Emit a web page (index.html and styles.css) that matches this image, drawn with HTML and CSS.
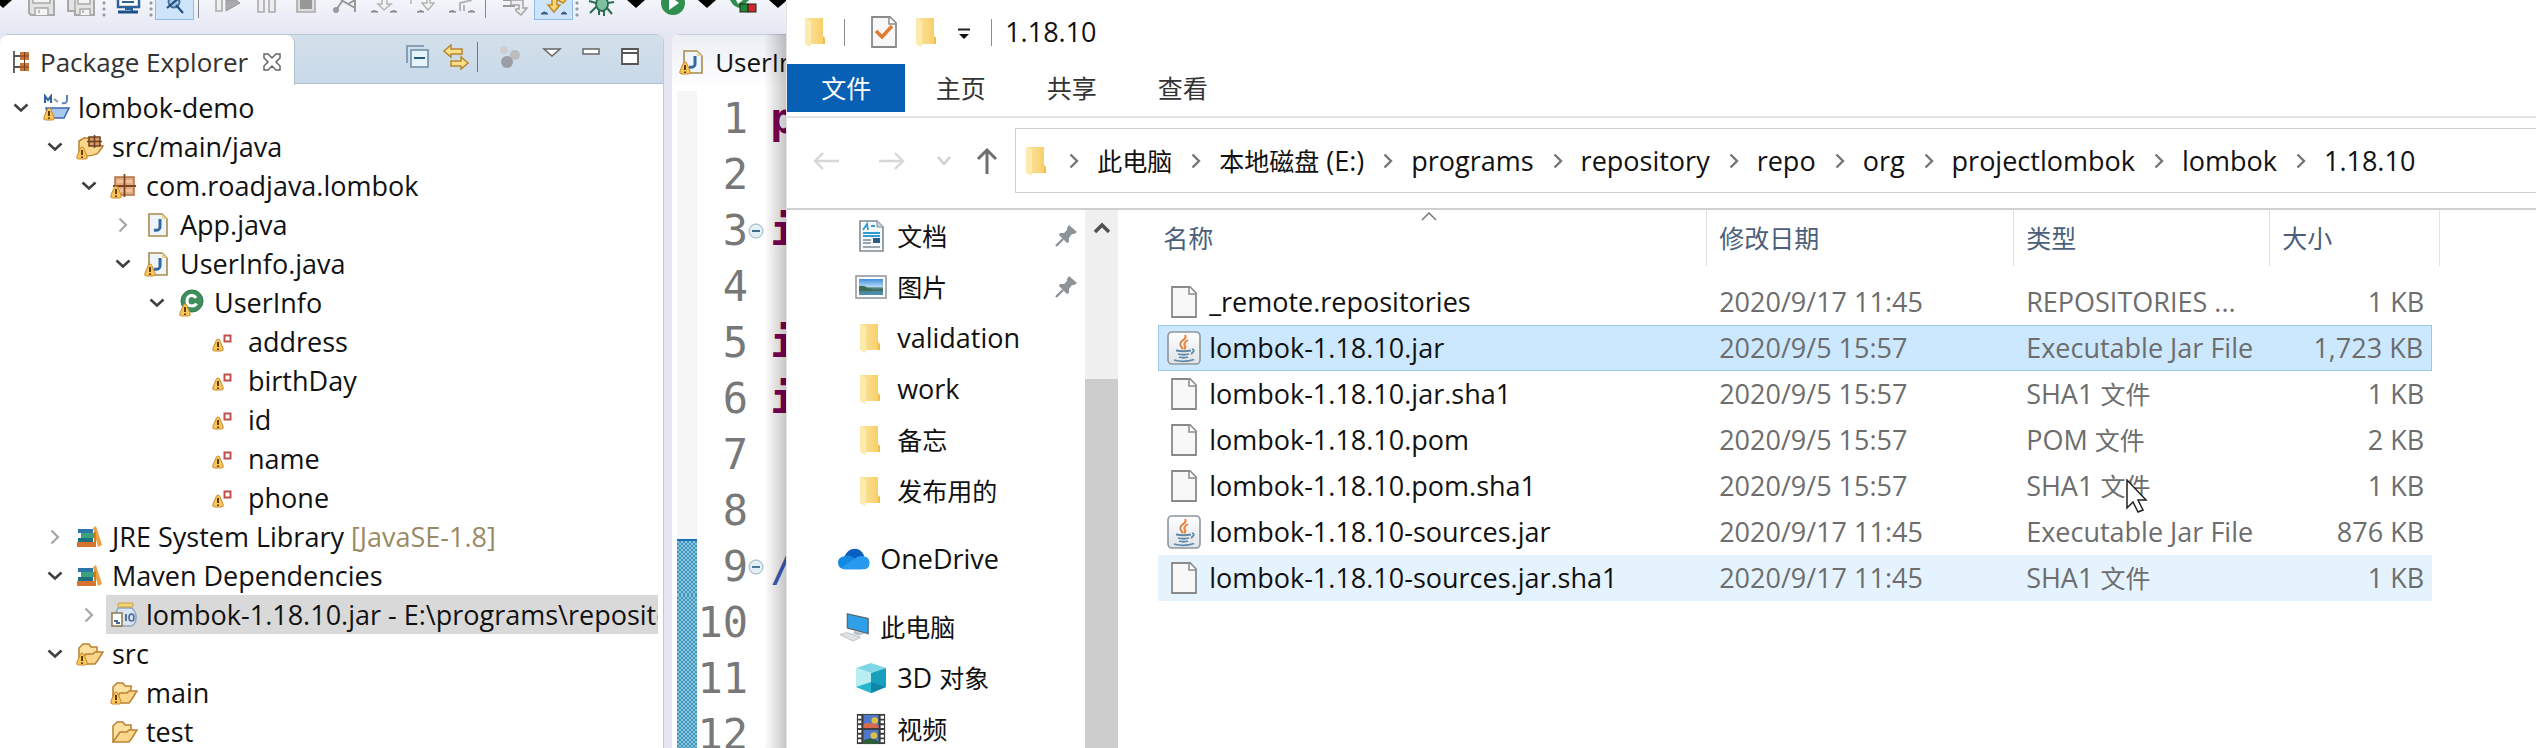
FILE: index.html
```html
<!DOCTYPE html>
<html lang="zh-CN">
<head>
    <meta charset="UTF-8">
    <meta name="viewport" content="width=device-width, initial-scale=1.0">
    <title>1.18.10</title>
    <link rel="stylesheet" href="styles.css">
</head>
<body>

<!-- shared icons -->
<svg class="sprite" aria-hidden="true">
    <defs>
        <linearGradient id="g-folder" x1="0" x2="1"><stop offset="0" stop-color="#fbe6a0"/><stop offset="1" stop-color="#f7cd66"/></linearGradient>
        <linearGradient id="g-sky" x1="0" y1="0" x2="0" y2="1"><stop offset="0" stop-color="#3f8fe0"/><stop offset="0.5" stop-color="#b7dcf4"/><stop offset="0.55" stop-color="#4c7f7c"/><stop offset="1" stop-color="#4b8fb5"/></linearGradient>
        <linearGradient id="g-java" x1="0" y1="0" x2="0" y2="1"><stop offset="0" stop-color="#ffffff"/><stop offset="1" stop-color="#dfe4e8"/></linearGradient>
    </defs>
    <symbol id="i-down" viewBox="0 0 16 10"><path d="M1.5 1.5L8 7.5L14.5 1.5" fill="none" stroke="#404040" stroke-width="2.6"/></symbol>
    <symbol id="i-right" viewBox="0 0 10 16"><path d="M1.5 1.5L8 8L1.5 14.5" fill="none" stroke="#a6a6a6" stroke-width="2.2"/></symbol>
    <symbol id="i-crumb" viewBox="0 0 10 16"><path d="M1.5 1.5L8 8L1.5 14.5" fill="none" stroke="#757575" stroke-width="2.4"/></symbol>
    <symbol id="i-warn" viewBox="0 0 12 14"><path d="M6 1Q7.5 1 8 3L11 10Q12 13 9.500 13H2.500Q0 13 1 10L4 3Q4.500 1 6 1Z" fill="#fbc55a" stroke="#c98a2c"/><path d="M6 4V9M6 10.500V12" stroke="#4a3000" stroke-width="1.800"/></symbol>
    <symbol id="i-project" viewBox="0 0 28 28"><path d="M3 9V2L6 6L9 2V9" fill="none" stroke="#2f62a5" stroke-width="2"/><path d="M12 5L16 8" stroke="#999" stroke-width="2"/><path d="M25 1V6Q25 10 20 9" fill="none" stroke="#5a85b8" stroke-width="2"/><path d="M4 14H27L22 24H6Z" fill="#a9c8f0" stroke="#3d66b0" stroke-width="1.500"/><use href="#i-warn" x="1" y="13" width="12" height="14"/></symbol>
    <symbol id="i-srcfolder" viewBox="0 0 28 28"><path d="M3 22V8L8 5H20V11L27 13L22 20Q18 23 8 23Z" fill="#fbd68a" stroke="#b98232" stroke-width="1.500"/><rect x="13" y="4" width="11" height="9" fill="#d99a62" stroke="#6d3f22" stroke-width="1.500"/><path d="M18.500 2V15M11 8.500H26" stroke="#6d3f22" stroke-width="1.500"/><use href="#i-warn" x="0" y="13" width="12" height="14"/></symbol>
    <symbol id="i-package" viewBox="0 0 28 28"><rect x="5" y="5" width="19" height="18" fill="#e2ab80" stroke="#b3704a" stroke-width="1.500"/><path d="M7 9.500H22M7 18.500H22" stroke="#efc29c" stroke-width="3"/><path d="M14.500 2V25M3 14H26" stroke="#7d4426" stroke-width="1.800"/><use href="#i-warn" x="0" y="13" width="12" height="14"/></symbol>
    <symbol id="i-java" viewBox="0 0 28 28"><path d="M5 3H18L23 8V25H5Z" fill="#eef4fa" stroke="#a98b4d" stroke-width="1.600"/><path d="M18 3V8H23Z" fill="#f0d48e"/><path d="M16 8V16Q16 20 10 19" fill="none" stroke="#33689f" stroke-width="3"/></symbol>
    <symbol id="i-javawarn" viewBox="0 0 28 28"><use href="#i-java" width="28" height="28"/><use href="#i-warn" x="0" y="13" width="12" height="14"/></symbol>
    <symbol id="i-class" viewBox="0 0 28 28"><circle cx="14" cy="12" r="11" fill="#3f8f5d" stroke="#2f7549"/><path d="M18 9Q16 6 13 6.500Q9 7.500 9 12Q9 17 14 17Q17 17 18.500 14.500" fill="none" stroke="#fff" stroke-width="3"/><use href="#i-warn" x="1" y="14" width="12" height="14"/></symbol>
    <symbol id="i-field" viewBox="0 0 28 28"><rect x="12.500" y="7.500" width="6" height="6" fill="#fff" stroke="#c0504d" stroke-width="2"/><use href="#i-warn" x="0" y="10" width="12" height="14"/></symbol>
    <symbol id="i-library" viewBox="0 0 28 28"><path d="M2 6H17V10H2Z" fill="#2b77a5"/><path d="M5 10H18V15H5Z" fill="#3da27e"/><path d="M2 15H17V19H2Z" fill="#1e6f80"/><path d="M1 19H18V24H1Z" fill="#d9722e"/><path d="M17 5L20 3L26 22L22 24Z" fill="#eda144"/><path d="M19 9V24" stroke="#c97c2a" stroke-width="2"/></symbol>
    <symbol id="i-jar" viewBox="0 0 28 28"><path d="M8 7H22Q27 12 26 18Q25 25 20 25H8Q4 22 5 14Z" fill="#d8e4f2" stroke="#8fa5c2" stroke-width="1.500"/><rect x="8" y="2" width="15" height="4" rx="1" fill="#f3d37c" stroke="#c9a03f"/><rect x="2" y="12" width="10" height="13" fill="#fff" stroke="#8a7a4a" stroke-width="1.500"/><path d="M4 20H8M6 22H10M16 13V20" stroke="#4a6a9a" stroke-width="1.800"/><ellipse cx="21.500" cy="16.500" rx="2.500" ry="3.500" fill="none" stroke="#4a6a9a" stroke-width="1.600"/></symbol>
    <symbol id="i-open" viewBox="0 0 28 28"><path d="M3 24V8L7 4H13L15 7H21V12" fill="#fbe0a0" stroke="#b98232" stroke-width="1.500"/><path d="M3 24L10 14H17L19 12H27L22 20L19 24Z" fill="#fbd68a" stroke="#b98232" stroke-width="1.500"/></symbol>
    <symbol id="i-openwarn" viewBox="0 0 28 28"><use href="#i-open" width="28" height="28"/><use href="#i-warn" x="0" y="12" width="12" height="14"/></symbol>
    <symbol id="i-folder" viewBox="0 0 24 32"><path d="M2 2H20V21L22 23V28H4Z" fill="url(#g-folder)"/><path d="M2 2L8 5V28L7 31L2 28Z" fill="#fdeaae"/><path d="M20 20V28H22V22Z" fill="#f0be4a"/></symbol>
    <symbol id="i-file" viewBox="0 0 26 32"><path d="M1 1H19L25 7V31H1Z" fill="#f8f8f8" stroke="#8a8a8a" stroke-width="1.800"/><path d="M18 1V8H25" fill="#fff" stroke="#8a8a8a" stroke-width="1.500"/></symbol>
    <symbol id="i-jarfile" viewBox="0 0 34 34"><rect x="1" y="1" width="32" height="32" rx="4" fill="url(#g-java)" stroke="#8d969c" stroke-width="1.600"/><path d="M18 4Q20 7 15 10Q11 13 16 18M21 9Q16 12 18 15Q19 17 17 18" fill="none" stroke="#e8813b" stroke-width="2"/><path d="M9 19.500Q17 21 24 19.500M11 23Q17 24.500 22 23M12 26Q17 27.500 21 26M25 18Q29 19 24 23" fill="none" stroke="#5f87a8" stroke-width="1.800"/><path d="M7 29Q17 32 27 28.500" fill="none" stroke="#5f87a8" stroke-width="1.800"/></symbol>
    <symbol id="i-doc" viewBox="0 0 32 32"><path d="M5 1H22L28 7V31H5Z" fill="#f7fafc" stroke="#7f8b94" stroke-width="1.600"/><path d="M22 1V7H28" fill="#cfd6dc" stroke="#7f8b94"/><path d="M8 10L12 4L13 10M16 6H20M8 13H25M8 16H25" stroke="#2f9bd0" stroke-width="1.800" fill="none"/><path d="M8 20H16M8 23H16M8 27H25" stroke="#7f8b94" stroke-width="1.500"/><rect x="18" y="18" width="7" height="5" fill="#2b5d88"/></symbol>
    <symbol id="i-pic" viewBox="0 0 32 32"><rect x="1" y="5" width="30" height="22" fill="#fff" stroke="#8b949b" stroke-width="1.500"/><rect x="4" y="8" width="24" height="16" fill="url(#g-sky)"/><path d="M4 15Q9 14 13 17Q21 20 28 18V20H4Z" fill="#3e6b56"/></symbol>
    <symbol id="i-pin" viewBox="0 0 24 24"><path d="M15 1L23 8L20 10L18 10L15 14L15 18L13 19L5 11L6 9L10 9L13 6L13 4Z" fill="#8c9399"/><path d="M9 15L2 22" stroke="#8c9399" stroke-width="2.400"/></symbol>
    <symbol id="i-cloud" viewBox="0 0 34 24"><path d="M6 11Q10 1 18 1Q25 1 28 9L14 17Z" fill="#0a5ec0"/><path d="M7 9Q13 7 17 11L29 21Q27 23 24 23H7Q0 22 0 16Q0 10 7 9Z" fill="#1389e0"/><path d="M17 12Q21 8 27 9Q34 10 33.500 17Q33 23 27 23H7Q4 22 4 21Z" fill="#279bf0"/></symbol>
    <symbol id="i-pc" viewBox="0 0 34 32"><path d="M10 2L32 7V23L10 17Z" fill="#2fa0ea" stroke="#5b6b78" stroke-width="1.500"/><path d="M18 20L24 22L29 23L22 25L16 23Z" fill="#b9c3cb"/><path d="M2 24L10 22L24 27L16 31Z" fill="#dfe3e6" stroke="#b9c0c5"/></symbol>
    <symbol id="i-cube" viewBox="0 0 32 32"><path d="M16 1L31 6L16 11L1 6Z" fill="#7fd6e6"/><path d="M1 6L16 11V31L1 25Z" fill="#b8edf2"/><path d="M31 6L16 11V31L31 25Z" fill="#17a0bd"/><path d="M1 25L16 20V31Z" fill="#27b5cc"/><path d="M16 20L31 25L16 31Z" fill="#0f86a8"/></symbol>
    <symbol id="i-film" viewBox="0 0 32 34"><rect x="1" y="1" width="30" height="32" fill="#3b3b3b"/><path d="M4 3V33M28 3V33" stroke="#fff" stroke-width="3.500" stroke-dasharray="3 2"/><rect x="8" y="2" width="16" height="14" fill="#4f78c8"/><rect x="8" y="18" width="16" height="15" fill="#4f78c8"/><path d="M8 12Q13 9 24 13V16H8Z" fill="#d9694d"/><circle cx="20" cy="8" r="3.500" fill="#e0c040"/><circle cx="19" cy="24" r="3.500" fill="#e0c040"/><path d="M8 29Q16 25 24 30V33H8Z" fill="#2f5d3a"/></symbol>
</svg>

<main class="desktop">
    <section class="eclipse">
        <div class="toolbar">
            <button class="tool drop" aria-label="more"><svg viewBox="0 0 18 20"><path d="M0 0H18L9 8Z"/></svg></button>
            <button class="tool" aria-label="Save"><svg viewBox="0 0 28 20"><path d="M1 0V13L3 15H26V0" fill="#e3e3e3" stroke="#a9a9a9" stroke-width="2"/><path d="M5 0V3H22V0M7 15V8H20V15M11 10V13" fill="#f4f4f4" stroke="#a9a9a9" stroke-width="1.500"/></svg></button>
            <button class="tool" aria-label="Save All"><svg viewBox="0 0 28 20"><path d="M1 0V11H8V15H27V0" fill="#e3e3e3" stroke="#a9a9a9" stroke-width="2"/><path d="M8 0V11M11 0V4H23V0M13 15V9H23V15M16 10V13" fill="#f4f4f4" stroke="#a9a9a9" stroke-width="1.500"/></svg></button>
            <span class="dots"></span>
            <button class="tool" aria-label="Console"><svg viewBox="0 0 28 20"><path d="M4 0V7H25V0" fill="#fff" stroke="#2d5f98" stroke-width="2.500"/><path d="M8 2H20M11 9H18V11" stroke="#2d5f98" stroke-width="2" fill="none"/><path d="M4 12H24" stroke="#1c4f8c" stroke-width="3"/></svg></button>
            <span class="dots"></span>
            <button class="tool on" aria-label="Skip breakpoints"><svg viewBox="0 0 28 20"><circle cx="13" cy="2" r="5.500" fill="#a8c8e4" stroke="#3b6c9c" stroke-width="1.800"/><path d="M6 8L18 -2M15 5L22 13" stroke="#23507f" stroke-width="2.200"/></svg></button>
            <span class="bar"></span>
            <button class="tool" aria-label="Resume"><svg viewBox="0 0 28 20"><path d="M2 0V11H8V0" fill="#eee" stroke="#aaa" stroke-width="1.600"/><path d="M12 0V11L26 3L22 0Z" fill="#aaa" stroke="#999"/></svg></button>
            <button class="tool" aria-label="Suspend"><svg viewBox="0 0 28 20"><path d="M5 0V12H11V0M16 0V12H22V0" fill="#eee" stroke="#aaa" stroke-width="1.600"/></svg></button>
            <button class="tool" aria-label="Terminate"><svg viewBox="0 0 28 20"><path d="M5 0V12H23V0" fill="#ddd" stroke="#aaa" stroke-width="1.600"/><path d="M8 0H20V9H8Z" fill="#989898"/></svg></button>
            <button class="tool" aria-label="Disconnect"><svg viewBox="0 0 28 20"><path d="M5 10L12 0M10 0L24 8M17 4L24 0V12" fill="none" stroke="#999" stroke-width="2"/><circle cx="5" cy="10" r="3" fill="#999"/></svg></button>
            <button class="tool" aria-label="Step Into"><svg viewBox="0 0 28 20"><path d="M12 0V4H8L14 10L21 4H17V0" fill="#f3f3f3" stroke="#b5b5b5" stroke-width="1.500"/><path d="M1 12Q4 9 8 12ZM20 12Q24 9 27 12Z" fill="#888" stroke="#888"/></svg></button>
            <button class="tool" aria-label="Step Over"><svg viewBox="0 0 28 20"><path d="M2 4V0M18 0V3H13L19 10L25 3H21V0" fill="#f3f3f3" stroke="#b5b5b5" stroke-width="1.500"/><path d="M8 12Q12 9 15 12Z" fill="#888" stroke="#888"/></svg></button>
            <button class="tool" aria-label="Step Return"><svg viewBox="0 0 28 20"><path d="M12 11V3L20 1L24 0M16 11V5" fill="none" stroke="#b5b5b5" stroke-width="2"/><path d="M1 12Q4 9 8 12ZM20 12Q24 9 27 12Z" fill="#888" stroke="#888"/></svg></button>
            <span class="bar"></span>
            <button class="tool" aria-label="Drop to Frame"><svg viewBox="0 0 28 20"><path d="M2 0H14M2 6H14" stroke="#999" stroke-width="2"/><path d="M10 0H22V8H26L20 15L15 11V9H18V5H10Z" fill="#eee" stroke="#a5a5a5" stroke-width="1.500"/></svg></button>
            <button class="tool on" aria-label="Use Step Filters"><svg viewBox="0 0 28 20"><path d="M12 0V5H8L14 12L20 5H17V0M18 0L23 3L26 0" fill="#fbd67a" stroke="#c58a1f" stroke-width="1.500"/><path d="M1 14Q4 10 8 14ZM21 14Q24 10 27 14Z" fill="#3d5f8d" stroke="#3d5f8d"/></svg></button>
            <span class="dots"></span>
            <button class="tool" aria-label="Debug"><svg viewBox="0 0 28 20"><ellipse cx="15" cy="4" rx="6" ry="7" fill="#7fc0a0" stroke="#2c6b50" stroke-width="1.800"/><path d="M9 3L2 1M9 7L3 13M21 3L27 2M20 8L25 14M12 10V15M17 10V16" stroke="#2c6b50" stroke-width="2"/></svg></button>
            <button class="tool drop" aria-label="Debug menu"><svg viewBox="0 0 18 20"><path d="M0 0H18L9 8Z"/></svg></button>
            <button class="tool" aria-label="Run"><svg viewBox="0 0 28 20"><circle cx="15" cy="3" r="12" fill="#2f8f4e"/><path d="M11 0H17L21 3L11 10Z" fill="#fff"/></svg></button>
            <button class="tool drop" aria-label="Run menu"><svg viewBox="0 0 18 20"><path d="M0 0H18L9 8Z"/></svg></button>
            <button class="tool" aria-label="External Tools"><svg viewBox="0 0 28 20"><path d="M1 0Q5 8 12 8L20 0Z" fill="#2f8f4e"/><path d="M7 0H14L9 4Z" fill="#fff"/><rect x="11" y="4" width="8" height="8" fill="#1e8a3a" stroke="#222"/><rect x="19" y="4" width="8" height="8" fill="#cf2a2a" stroke="#222"/></svg></button>
            <button class="tool drop" aria-label="External Tools menu"><svg viewBox="0 0 18 20"><path d="M0 0H18L9 8Z"/></svg></button>
        </div>

        <div class="workbench">
            <div class="view">
                <header class="view-header">
                    <h1 class="view-tab">
                        <svg class="tab-icon" viewBox="0 0 18 24"><path d="M2 1V23M2 6H8M2 17H8" fill="none" stroke="#555" stroke-width="1.800"/><rect x="8" y="2" width="9" height="8" fill="#c9763a"/><rect x="8" y="13" width="9" height="8" fill="#c9763a"/><path d="M12.500 2V21M8 6H17M8 17H17" stroke="#7a3e18"/></svg>
                        Package Explorer
                        <svg class="tab-close" viewBox="0 0 20 20"><path d="M2 2H6L10 6L14 2H18V6L14 10L18 14V18H14L10 14L6 18H2V14L6 10L2 6Z" fill="#fff" stroke="#666" stroke-width="1.500"/></svg>
                    </h1>
                    <div class="view-tools">
                        <button aria-label="Collapse All"><svg viewBox="0 0 26 26"><path d="M2 19V2H19" fill="none" stroke="#6f8fa8" stroke-width="1.600"/><rect x="6" y="6" width="17" height="17" fill="#e6f4fa" stroke="#6f8fa8" stroke-width="1.600"/><path d="M9 14H20" stroke="#1f5a80" stroke-width="2.200"/></svg></button>
                        <button aria-label="Link with Editor"><svg viewBox="0 0 26 26"><path d="M1 7L8 1V5H19V10H8V13Z" fill="#fbe08c" stroke="#b9862c" stroke-width="1.500"/><path d="M25 19L18 13V17H8V22H18V25Z" fill="#fbe08c" stroke="#b9862c" stroke-width="1.500"/></svg></button>
                        <span class="view-sep"></span>
                        <button aria-label="Focus"><svg viewBox="0 0 26 26"><circle cx="8" cy="6" r="4" fill="#cfcfcf"/><circle cx="19" cy="11" r="5" fill="#bcbcbc"/><circle cx="11" cy="18" r="6" fill="#9c9ca4"/></svg></button>
                        <button class="last" aria-label="View Menu"><svg viewBox="0 0 26 26"><path d="M5 5H21L13 12Z" fill="#fff" stroke="#666" stroke-width="1.500"/></svg></button>
                        <button class="last" aria-label="Minimize"><svg viewBox="0 0 26 26"><rect x="5" y="5" width="16" height="5" fill="#fff" stroke="#666" stroke-width="1.500"/></svg></button>
                        <button class="last" aria-label="Maximize"><svg viewBox="0 0 26 26"><path d="M5 5H21V20H5ZM5 9H21" fill="#fff" stroke="#555" stroke-width="1.800"/></svg></button>
                    </div>
                </header>

                <ul class="tree">
                    <li class="level0"><span class="twisty"><svg class="tw-down"><use href="#i-down"/></svg></span><span class="item"><svg class="ico"><use href="#i-project"/></svg>lombok-demo</span></li>
                    <li class="level1"><span class="twisty"><svg class="tw-down"><use href="#i-down"/></svg></span><span class="item"><svg class="ico"><use href="#i-srcfolder"/></svg>src/main/java</span></li>
                    <li class="level2"><span class="twisty"><svg class="tw-down"><use href="#i-down"/></svg></span><span class="item"><svg class="ico"><use href="#i-package"/></svg>com.roadjava.lombok</span></li>
                    <li class="level3"><span class="twisty"><svg class="tw-right"><use href="#i-right"/></svg></span><span class="item"><svg class="ico"><use href="#i-java"/></svg>App.java</span></li>
                    <li class="level3"><span class="twisty"><svg class="tw-down"><use href="#i-down"/></svg></span><span class="item"><svg class="ico"><use href="#i-javawarn"/></svg>UserInfo.java</span></li>
                    <li class="level4"><span class="twisty"><svg class="tw-down"><use href="#i-down"/></svg></span><span class="item"><svg class="ico"><use href="#i-class"/></svg>UserInfo</span></li>
                    <li class="level5"><span class="twisty"></span><span class="item"><svg class="ico"><use href="#i-field"/></svg>address</span></li>
                    <li class="level5"><span class="twisty"></span><span class="item"><svg class="ico"><use href="#i-field"/></svg>birthDay</span></li>
                    <li class="level5"><span class="twisty"></span><span class="item"><svg class="ico"><use href="#i-field"/></svg>id</span></li>
                    <li class="level5"><span class="twisty"></span><span class="item"><svg class="ico"><use href="#i-field"/></svg>name</span></li>
                    <li class="level5"><span class="twisty"></span><span class="item"><svg class="ico"><use href="#i-field"/></svg>phone</span></li>
                    <li class="level1"><span class="twisty"><svg class="tw-right"><use href="#i-right"/></svg></span><span class="item"><svg class="ico"><use href="#i-library"/></svg>JRE System Library&nbsp;<span class="version">[JavaSE-1.8]</span></span></li>
                    <li class="level1"><span class="twisty"><svg class="tw-down"><use href="#i-down"/></svg></span><span class="item"><svg class="ico"><use href="#i-library"/></svg>Maven Dependencies</span></li>
                    <li class="level2"><span class="twisty"><svg class="tw-right"><use href="#i-right"/></svg></span><span class="item current"><svg class="ico"><use href="#i-jar"/></svg>lombok-1.18.10.jar - E:\programs\reposito</span></li>
                    <li class="level1"><span class="twisty"><svg class="tw-down"><use href="#i-down"/></svg></span><span class="item"><svg class="ico"><use href="#i-openwarn"/></svg>src</span></li>
                    <li class="level2"><span class="twisty"></span><span class="item"><svg class="ico"><use href="#i-openwarn"/></svg>main</span></li>
                    <li class="level2"><span class="twisty"></span><span class="item"><svg class="ico"><use href="#i-open"/></svg>test</span></li>
                </ul>
            </div>

            <div class="editor">
                <div class="editor-tab"><svg class="ico"><use href="#i-javawarn"/></svg>UserIn</div>
                <div class="code">
                    <div class="line"><span class="ruler"></span><span class="num">1</span><span class="fold"></span><b>p</b></div>
                    <div class="line"><span class="ruler"></span><span class="num">2</span></div>
                    <div class="line"><span class="ruler"></span><span class="num">3</span><span class="fold"><svg viewBox="0 0 16 16"><circle cx="8" cy="8" r="7" fill="#e3eff5" stroke="#8fb0bf"/><path d="M4 8H12" stroke="#3c6d88" stroke-width="1.800"/></svg></span><b>i</b></div>
                    <div class="line"><span class="ruler"></span><span class="num">4</span></div>
                    <div class="line"><span class="ruler"></span><span class="num">5</span><span class="fold"></span><b>i</b></div>
                    <div class="line"><span class="ruler"></span><span class="num">6</span><span class="fold"></span><b>i</b></div>
                    <div class="line"><span class="ruler"></span><span class="num">7</span></div>
                    <div class="line"><span class="ruler"></span><span class="num">8</span></div>
                    <div class="line"><span class="ruler changed first"></span><span class="num">9</span><span class="fold"><svg viewBox="0 0 16 16"><circle cx="8" cy="8" r="7" fill="#e3eff5" stroke="#8fb0bf"/><path d="M4 8H12" stroke="#3c6d88" stroke-width="1.800"/></svg></span><i>/</i></div>
                    <div class="line"><span class="ruler changed"></span><span class="num">10</span></div>
                    <div class="line"><span class="ruler changed"></span><span class="num">11</span></div>
                    <div class="line"><span class="ruler changed"></span><span class="num">12</span></div>
                </div>
            </div>
        </div>
    </section>

    <section class="explorer">
        <header class="titlebar">
            <svg class="folder"><use href="#i-folder"/></svg>
            <span class="title-sep"></span>
            <button class="quick" aria-label="属性"><svg class="file"><use href="#i-file"/></svg><svg class="check" viewBox="0 0 20 16"><path d="M2 7L8 13L18 2" fill="none" stroke="#e07b34" stroke-width="3.500"/></svg></button>
            <button class="quick" aria-label="新建文件夹"><svg class="folder"><use href="#i-folder"/></svg></button>
            <button class="quick" aria-label="自定义"><svg class="caret" viewBox="0 0 12 12"><path d="M0 1.500H12" stroke="#222" stroke-width="2"/><path d="M1 6H11L6 11Z" fill="#111"/></svg></button>
            <span class="title-sep end"></span>
            <span class="title">1.18.10</span>
        </header>

        <nav class="ribbon">
            <button class="active">文件</button>
            <button>主页</button>
            <button>共享</button>
            <button>查看</button>
        </nav>

        <div class="navbar">
            <button class="nav-btn" aria-label="后退"><svg viewBox="0 0 26 26"><path d="M26 13H2M10 5L2 13L10 21" fill="none" stroke="#d6d6d6" stroke-width="2.400"/></svg></button>
            <button class="nav-btn" aria-label="前进"><svg viewBox="0 0 26 26"><path d="M0 13H24M16 5L24 13L16 21" fill="none" stroke="#d6d6d6" stroke-width="2.400"/></svg></button>
            <button class="nav-btn recent" aria-label="最近"><svg viewBox="0 0 26 26"><path d="M7 9L13 16L19 9" fill="none" stroke="#cfcfcf" stroke-width="2.400"/></svg></button>
            <button class="nav-btn up" aria-label="上移"><svg viewBox="0 0 26 26"><path d="M13 26V2M4 11L13 2L22 11" fill="none" stroke="#6f6f6f" stroke-width="3"/></svg></button>
            <div class="address">
                <svg class="folder"><use href="#i-folder"/></svg>
                <svg class="sep"><use href="#i-crumb"/></svg>
                <a href="#" class="zh">此电脑</a>
                <svg class="sep"><use href="#i-crumb"/></svg>
                <a href="#"><span class="zh">本地磁盘</span> (E:)</a>
                <svg class="sep"><use href="#i-crumb"/></svg>
                <a href="#">programs</a>
                <svg class="sep"><use href="#i-crumb"/></svg>
                <a href="#">repository</a>
                <svg class="sep"><use href="#i-crumb"/></svg>
                <a href="#">repo</a>
                <svg class="sep"><use href="#i-crumb"/></svg>
                <a href="#">org</a>
                <svg class="sep"><use href="#i-crumb"/></svg>
                <a href="#">projectlombok</a>
                <svg class="sep"><use href="#i-crumb"/></svg>
                <a href="#">lombok</a>
                <svg class="sep"><use href="#i-crumb"/></svg>
                <a href="#">1.18.10</a>
            </div>
        </div>

        <div class="content">
            <aside class="sidebar">
                <div class="places">
                    <a href="#" class="place sub zh"><svg><use href="#i-doc"/></svg>文档<svg class="pin"><use href="#i-pin"/></svg></a>
                    <a href="#" class="place sub zh"><svg><use href="#i-pic"/></svg>图片<svg class="pin"><use href="#i-pin"/></svg></a>
                    <a href="#" class="place sub"><svg class="dir"><use href="#i-folder"/></svg>validation</a>
                    <a href="#" class="place sub"><svg class="dir"><use href="#i-folder"/></svg>work</a>
                    <a href="#" class="place sub zh"><svg class="dir"><use href="#i-folder"/></svg>备忘</a>
                    <a href="#" class="place sub zh"><svg class="dir"><use href="#i-folder"/></svg>发布用的</a>
                    <a href="#" class="place root"><svg><use href="#i-cloud"/></svg>OneDrive</a>
                    <a href="#" class="place root zh"><svg><use href="#i-pc"/></svg>此电脑</a>
                    <a href="#" class="place sub"><svg><use href="#i-cube"/></svg>3D&nbsp;<span class="zh">对象</span></a>
                    <a href="#" class="place sub zh"><svg><use href="#i-film"/></svg>视频</a>
                </div>
                <div class="scrollbar">
                    <svg viewBox="0 0 18 12"><path d="M2 10L9 3L16 10" fill="none" stroke="#505050" stroke-width="3.500"/></svg>
                    <div class="thumb"></div>
                </div>
            </aside>

            <div class="files">
                <table>
                    <colgroup><col class="c-name"><col class="c-date"><col class="c-type"><col class="c-size"><col class="c-edge"></colgroup>
                    <thead>
                        <tr>
                            <th>名称<svg class="sort" viewBox="0 0 16 9"><path d="M1 8L8 1L15 8" fill="none" stroke="#777" stroke-width="1.500"/></svg></th>
                            <th>修改日期</th>
                            <th>类型</th>
                            <th class="open">大小</th>
                            <th></th>
                        </tr>
                    </thead>
                    <tbody>
                        <tr><td class="name"><svg class="file"><use href="#i-file"/></svg>_remote.repositories</td><td>2020/9/17 11:45</td><td>REPOSITORIES ...</td><td class="size">1 KB</td></tr>
                        <tr class="selected"><td class="name"><svg class="jar"><use href="#i-jarfile"/></svg>lombok-1.18.10.jar</td><td>2020/9/5 15:57</td><td>Executable Jar File</td><td class="size">1,723 KB</td></tr>
                        <tr><td class="name"><svg class="file"><use href="#i-file"/></svg>lombok-1.18.10.jar.sha1</td><td>2020/9/5 15:57</td><td>SHA1 <span class="zh">文件</span></td><td class="size">1 KB</td></tr>
                        <tr><td class="name"><svg class="file"><use href="#i-file"/></svg>lombok-1.18.10.pom</td><td>2020/9/5 15:57</td><td>POM <span class="zh">文件</span></td><td class="size">2 KB</td></tr>
                        <tr><td class="name"><svg class="file"><use href="#i-file"/></svg>lombok-1.18.10.pom.sha1</td><td>2020/9/5 15:57</td><td>SHA1 <span class="zh">文件</span><svg class="cursor" viewBox="0 0 22 34"><path d="M1 1V29L7 23L12 33L17 31L12 21H20Z" fill="#fff" stroke="#222" stroke-width="1.500"/></svg></td><td class="size">1 KB</td></tr>
                        <tr><td class="name"><svg class="jar"><use href="#i-jarfile"/></svg>lombok-1.18.10-sources.jar</td><td>2020/9/17 11:45</td><td>Executable Jar File</td><td class="size">876 KB</td></tr>
                        <tr class="hover"><td class="name"><svg class="file"><use href="#i-file"/></svg>lombok-1.18.10-sources.jar.sha1</td><td>2020/9/17 11:45</td><td>SHA1 <span class="zh">文件</span></td><td class="size">1 KB</td></tr>
                    </tbody>
                </table>
            </div>
        </div>
    </section>
</main>

</body>
</html>
```
FILE: styles.css
```css
* {
    box-sizing: border-box;
    margin: 0;
    padding: 0;
}

body {
    font-family: "Open Sans", "Noto Sans CJK SC", sans-serif;
    font-size: 27px;
    line-height: 36px;
    color: #111;
    background-color: #fff;
    overflow: hidden;
}

button {
    font: inherit;
    color: inherit;
    background: none;
    border: none;
    cursor: pointer;
}

a {
    color: inherit;
    text-decoration: none;
}

svg {
    display: block;
    flex-shrink: 0;
}

.sprite {
    position: absolute;
    width: 0;
    height: 0;
}

.zh {
    font-size: 25px;
}

.desktop {
    display: flex;
    height: 100vh;
}

/* Eclipse */
.eclipse {
    width: 31%;
    display: flex;
    flex-direction: column;
    overflow: hidden;
    background-color: #e6e6f2;
}

.toolbar {
    display: flex;
    height: 34px;
    flex-shrink: 0;
    background: linear-gradient(#f3f5fb, #e5e6f3);
}

.tool {
    flex: 0 0 39px;
    height: 20px;
    display: flex;
    justify-content: center;
}

.tool svg {
    width: 28px;
    height: 20px;
}

.tool.on {
    background-color: #cde4fa;
    border: 1px solid #8fbce8;
    border-top: none;
}

.tool.drop {
    flex-basis: 32px;
}

.tool.drop:first-child {
    flex-basis: 22px;
    justify-content: flex-start;
}

.tool.drop:first-child svg {
    margin-left: -6px;
}

.tool.drop svg {
    width: 18px;
}

.dots {
    flex: 0 0 8px;
    height: 17px;
    background: radial-gradient(circle, #999 1px, transparent 2px) center top / 8px 6px repeat-y;
}

.bar {
    flex: 0 0 14px;
    height: 18px;
    background: linear-gradient(#888, #888) 4px 0 / 1px 18px no-repeat;
}

.workbench {
    flex: 1;
    display: flex;
    min-height: 0;
}

.view {
    flex: 1;
    min-width: 0;
    background-color: #fff;
    border-right: 1px solid #c3c9d8;
    border-radius: 8px 8px 0 0;
    overflow: hidden;
}

.view-header {
    display: flex;
    justify-content: space-between;
    height: 50px;
    background: linear-gradient(#d3e0ea, #c9d9e9);
    border-top: 1px solid #bcc8d2;
    border-bottom: 1px solid #b0bfce;
}

.view-tab {
    display: flex;
    align-items: center;
    height: 50px;
    padding: 4px 12px 0;
    font-size: 26px;
    font-weight: 400;
    color: #333;
    background-color: #fff;
    border-right: 1px solid #b0bfce;
    border-radius: 8px 8px 0 0;
}

.tab-icon {
    width: 18px;
    height: 24px;
    margin-right: 10px;
}

.tab-close {
    width: 20px;
    height: 20px;
    margin-left: 14px;
}

.view-tools {
    display: flex;
    align-items: center;
    gap: 12px;
    padding: 0 20px 4px 0;
}

.view-tools svg {
    width: 26px;
    height: 26px;
}

.view-sep {
    width: 1px;
    height: 30px;
    margin: 0 6px 0 -4px;
    background-color: #777;
}

.view-tools .last {
    margin-left: 1px;
}

.view-sep + button {
    margin-right: 4px;
}

.tree {
    list-style: none;
    padding: 4px 5px 0 0;
}

.tree li {
    display: flex;
    height: 39px;
    white-space: nowrap;
}

.twisty {
    flex: 0 0 38px;
    display: flex;
    align-items: center;
    justify-content: center;
    padding-left: 4px;
}

.tw-down {
    width: 16px;
    height: 10px;
}

.tw-right {
    width: 10px;
    height: 16px;
}

.item {
    flex: 1;
    min-width: 0;
    display: flex;
    align-items: center;
    padding-left: 4px;
    overflow: hidden;
}

.item.current {
    background-color: #d9d9d9;
}

.ico {
    width: 28px;
    height: 28px;
    margin-right: 8px;
}

.version {
    color: #9a8a64;
}

.level1 { padding-left: 34px; }
.level2 { padding-left: 68px; }
.level3 { padding-left: 102px; }
.level4 { padding-left: 136px; }
.level5 { padding-left: 170px; }

.editor {
    position: relative;
    flex: 0 0 114px;
    margin-left: 8px;
    background-color: #fff;
    border-radius: 8px 0 0 0;
    overflow: hidden;
}

/* shadow thrown by the window on the right */
.editor::after {
    content: "";
    position: absolute;
    top: 0;
    right: 0;
    bottom: 0;
    width: 22px;
    background: linear-gradient(to right, rgba(0, 0, 0, 0), rgba(0, 0, 0, 0.22));
}

.editor-tab {
    display: flex;
    align-items: center;
    height: 54px;
    padding-left: 7px;
    font-size: 26px;
    background: linear-gradient(#eceef6, #fff);
    border-top: 1px solid #c9cfdb;
}

.code {
    padding: 3px 0 0 5px;
    font-family: "DejaVu Sans Mono", monospace;
    font-size: 42px;
    line-height: 56px;
    white-space: nowrap;
}

.line {
    display: flex;
    height: 56px;
}

.line b {
    color: #7f0055;
}

.line i {
    color: #3f5fbf;
    font-style: normal;
}

.ruler {
    flex: 0 0 20px;
    background-color: #f6f6f9;
}

.ruler.changed {
    background: repeating-conic-gradient(#3f93bd 0 25%, #8cc6dd 0 50%) 0 0 / 4px 4px;
}

.ruler.first {
    border-top: 2px solid #1f6fb8;
}

.num {
    flex: 0 0 51px;
    text-align: right;
    color: #787878;
}

.fold {
    flex: 0 0 22px;
    display: flex;
    align-items: center;
}

.fold svg {
    width: 16px;
    height: 16px;
}

/* File Explorer */
.explorer {
    flex: 1;
    min-width: 0;
    display: flex;
    flex-direction: column;
    background-color: #fff;
    border-left: 1px solid #e4e4e4;
}

.folder {
    width: 24px;
    height: 32px;
}

.file {
    width: 26px;
    height: 32px;
}

.titlebar {
    display: flex;
    align-items: center;
    height: 64px;
    padding-left: 16px;
}

.title-sep {
    width: 1px;
    height: 27px;
    margin: 0 26px 0 17px;
    background-color: #8c8c8c;
}

.title-sep.end {
    margin: 0 13px 0 21px;
}

.quick {
    position: relative;
    margin-right: 17px;
}

.quick .check {
    position: absolute;
    top: 8px;
    left: 3px;
    width: 20px;
    height: 16px;
}

.quick:nth-of-type(3) {
    margin: 4px 0 0 3px;
}

.caret {
    width: 12px;
    height: 12px;
}

.ribbon {
    display: flex;
    height: 54px;
    border-bottom: 2px solid #e2e2e2;
}

.ribbon button {
    width: 111px;
    height: 48px;
    font-size: 25px;
    color: #333;
}

.ribbon .active {
    width: 118px;
    color: #fff;
    background-color: #0760b4;
}

.navbar {
    display: flex;
    align-items: center;
    height: 92px;
    padding: 0 0 5px 26px;
    border-bottom: 2px solid #cfcfcf;
}

.nav-btn {
    margin-right: 40px;
}

.nav-btn svg {
    width: 26px;
    height: 26px;
}

.nav-btn.recent {
    margin: 0 17px 0 -14px;
}

.nav-btn.up {
    margin-right: 15px;
}

.address {
    flex: 1;
    display: flex;
    align-items: center;
    height: 65px;
    padding-left: 8px;
    border: 1px solid #cfcfcf;
    border-right: none;
    white-space: nowrap;
}

.address .sep {
    width: 10px;
    height: 16px;
    margin: 0 18px 0 19px;
}

.address .folder + .sep {
    margin-left: 21px;
}

.content {
    flex: 1;
    display: flex;
    min-height: 0;
}

.sidebar {
    flex: 0 0 331px;
    display: flex;
}

.places {
    flex: 1;
    overflow: hidden;
}

.place {
    display: flex;
    align-items: center;
    height: 51px;
}

.place svg {
    width: 32px;
    height: 32px;
    margin-right: 10px;
}

.place .dir {
    width: 24px;
    margin: 0 15px 0 3px;
}

.place .pin {
    width: 24px;
    height: 24px;
    margin: 0 7px 0 auto;
}

.place.sub {
    padding-left: 68px;
}

.place.root {
    padding-left: 51px;
    margin-top: 17px;
}

.scrollbar {
    width: 33px;
    display: flex;
    flex-direction: column;
    align-items: center;
    background-color: #f0f0f0;
}

.scrollbar svg {
    width: 18px;
    height: 12px;
    margin: 12px 0 145px;
}

.thumb {
    flex: 1;
    width: 100%;
    background-color: #cdcdcd;
}

.files {
    flex: 1;
    min-width: 0;
    padding-left: 40px;
    overflow: hidden;
}

table {
    width: 1282px;
    table-layout: fixed;
    border-collapse: separate;
    border-spacing: 0;
}

.c-name { width: 549px; }
.c-date { width: 307px; }
.c-type { width: 256px; }
.c-size { width: 162px; }
.c-edge { width: 8px; }

th {
    position: relative;
    height: 56px;
    padding-left: 12px;
    font-size: 25px;
    font-weight: 400;
    text-align: left;
    color: #4c5f7a;
    border-right: 1px solid #e2e2e2;
}

th:first-child {
    padding-left: 5px;
}

th:last-child {
    padding: 0;
}

th.open {
    border-right: none;
}

.sort {
    position: absolute;
    top: 2px;
    left: 48%;
    width: 16px;
    height: 9px;
}

tbody::before {
    content: "";
    display: block;
    height: 13px;
}

td {
    position: relative;
    height: 46px;
    padding-left: 12px;
    color: #6d6d6d;
    white-space: nowrap;
    border-top: 1px solid transparent;
    border-bottom: 1px solid transparent;
}

td.name {
    display: flex;
    align-items: center;
    color: #111;
}

td .file {
    margin: 0 12px 0 1px;
}

td .jar {
    width: 34px;
    height: 34px;
    margin: 0 8px 0 -3px;
}

td.size {
    padding: 0 8px 0 0;
    text-align: right;
}

.selected td {
    background-color: #cce8ff;
    border-color: #9cc8e4;
}

.selected td.name {
    border-left: 1px solid #9cc8e4;
    padding-left: 11px;
}

.selected td.size {
    border-right: 1px solid #9cc8e4;
}

.hover td {
    background-color: #e5f3ff;
}

.cursor {
    position: absolute;
    top: 15px;
    left: 112px;
    width: 22px;
    height: 34px;
}
```
